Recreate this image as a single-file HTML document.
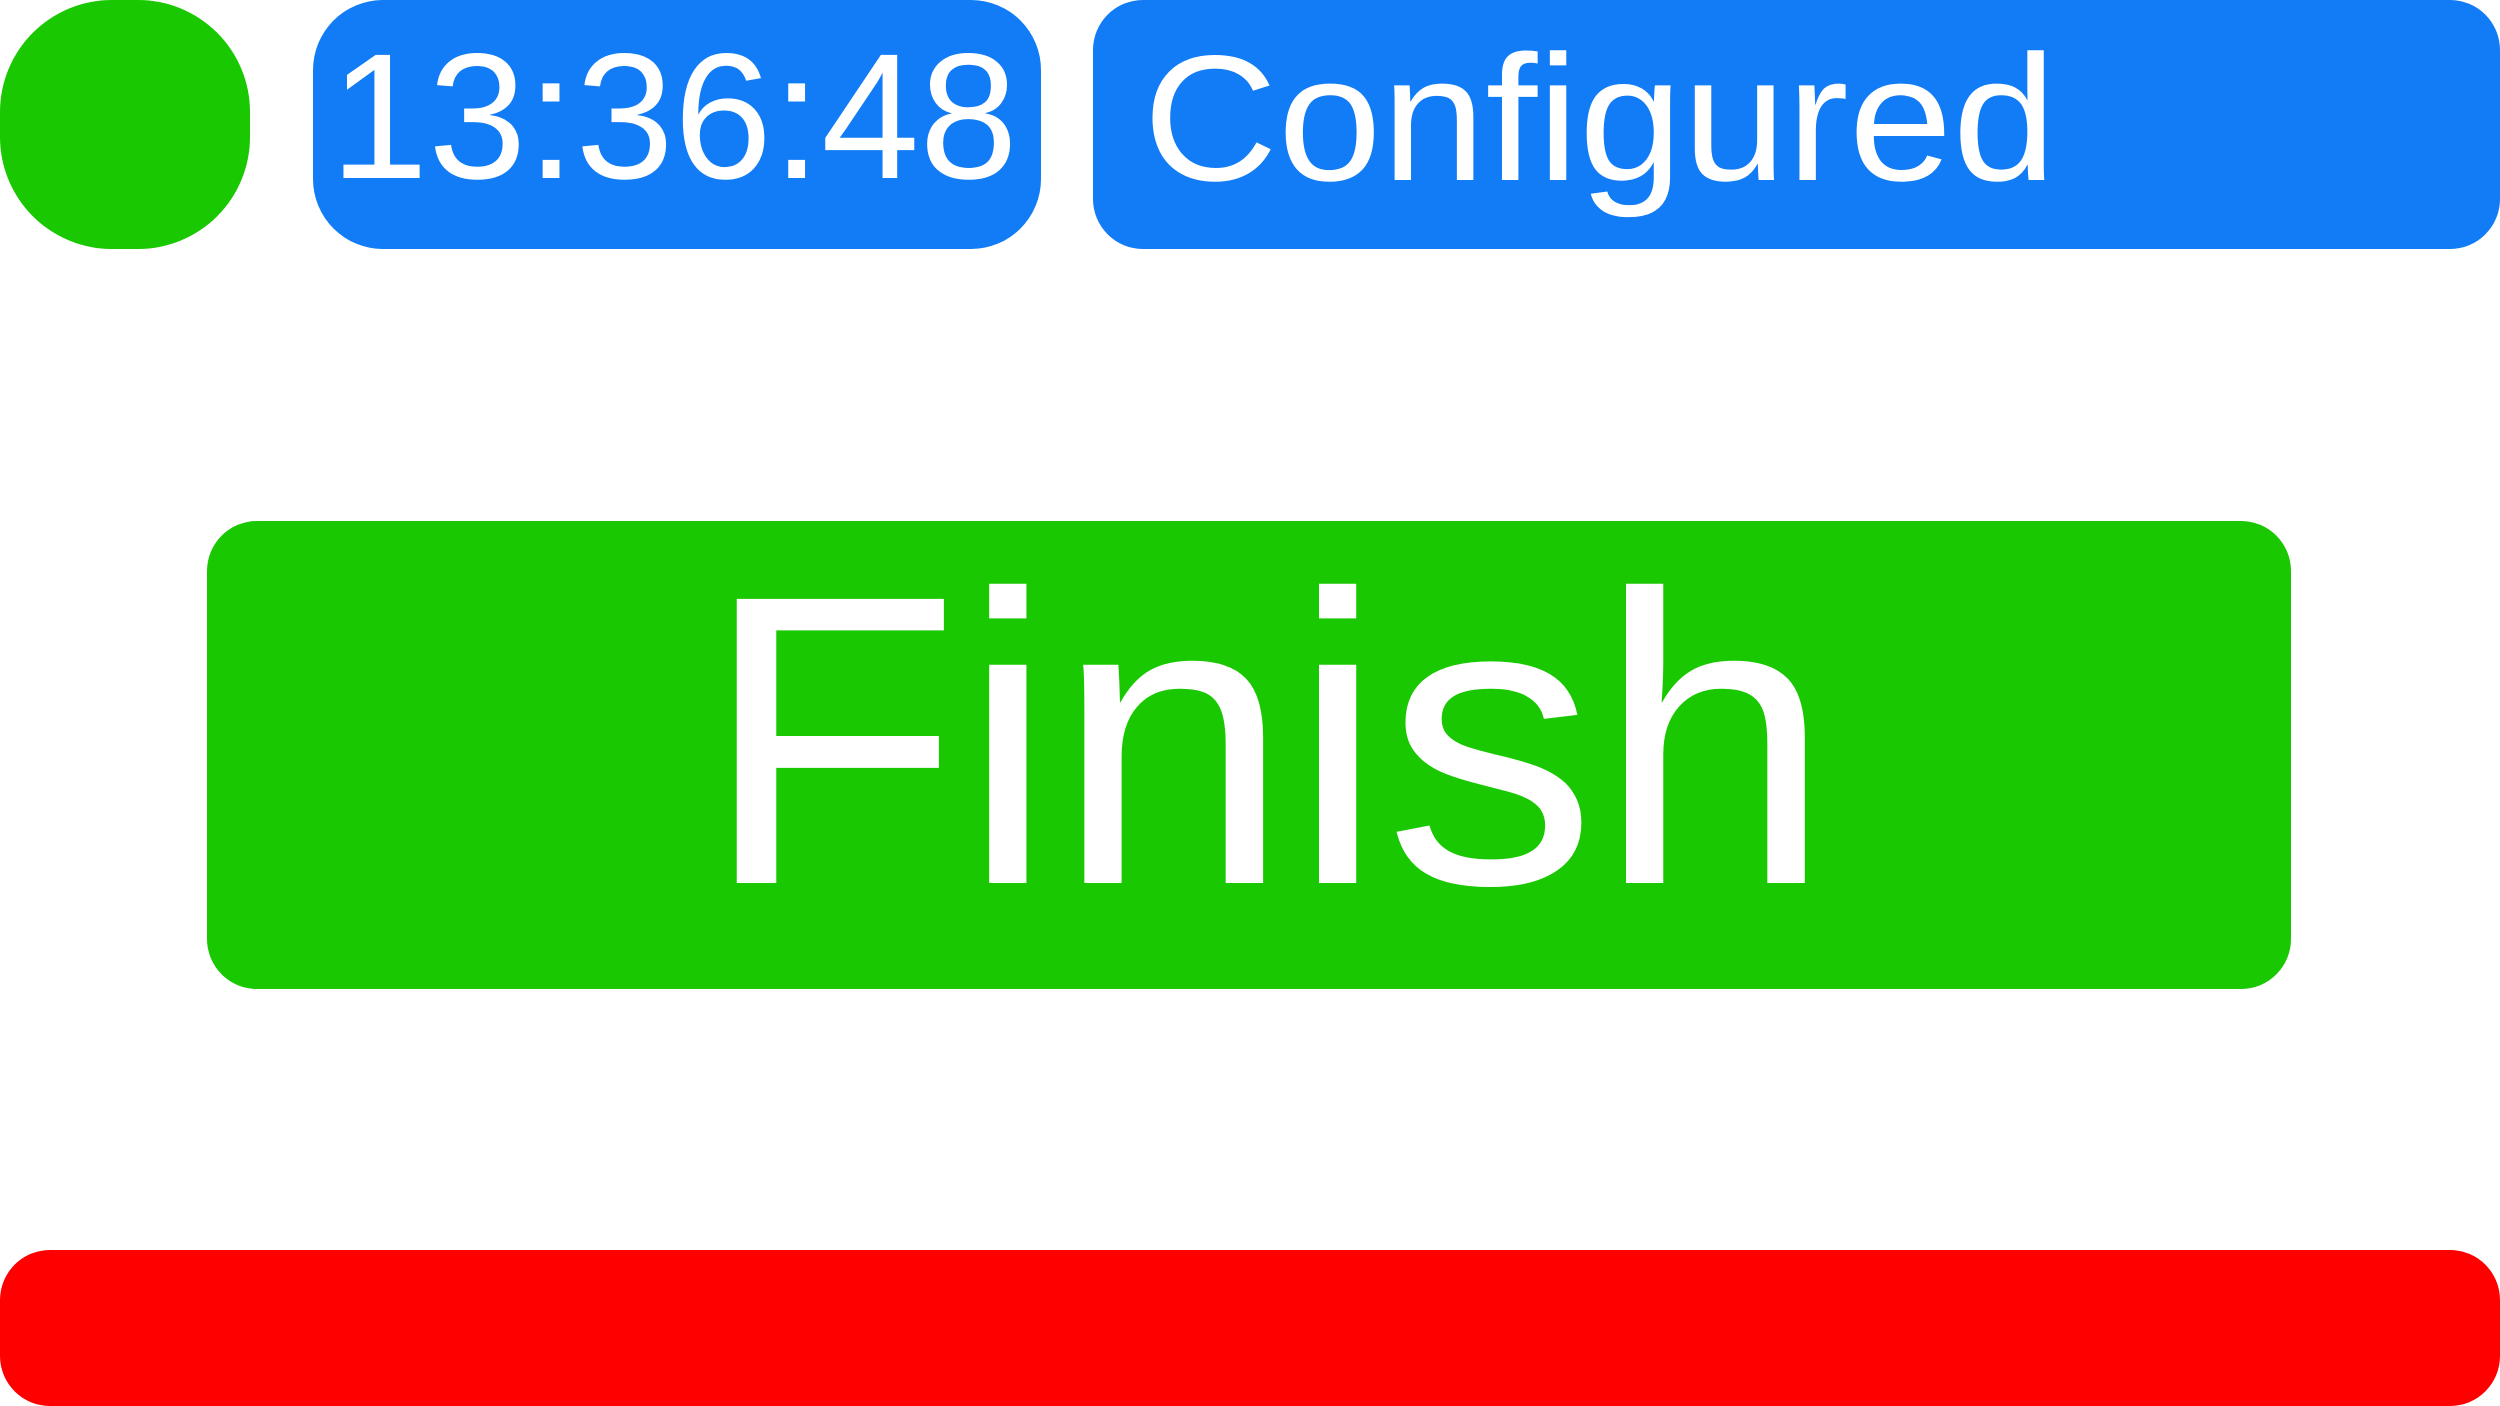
<!DOCTYPE html>
<html><head><style>
html,body{margin:0;padding:0;width:2500px;height:1406px;background:#fff;overflow:hidden;position:relative;font-family:"Liberation Sans",sans-serif;color:#fff}
.b{position:absolute}
.t{position:absolute;white-space:nowrap;line-height:1;transform-origin:0 0}
</style></head><body>
<div class="b" style="left:0;top:0;width:250px;height:249px;background:#19c800;border-radius:112px"></div>
<div class="b" style="left:313px;top:0;width:728px;height:249px;background:#117cf5;border-radius:70px"></div>
<div class="t" style="left:330px;top:27px;font-size:179px;transform:scaleX(0.987)">13:36:48</div>
<div class="b" style="left:1093px;top:0;width:1407px;height:249px;background:#117cf5;border-radius:50px"></div>
<div class="t" style="left:1143px;top:29px;font-size:179px;transform:scaleX(1.043)">Configured</div>
<div class="b" style="left:207px;top:521px;width:2084px;height:468px;background:#19c800;border-radius:50px"></div>
<div class="t" style="left:702px;top:534px;font-size:413px;transform:scaleX(1.026)">Finish</div>
<div class="b" style="left:0;top:1250px;width:2500px;height:156px;background:#ff0000;border-radius:50px"></div>
</body></html>
